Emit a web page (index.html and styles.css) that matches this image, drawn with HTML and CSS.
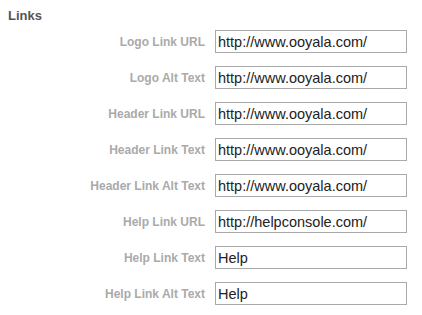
FILE: index.html
```html
<!DOCTYPE html>
<html lang="en">
<head>
    <meta charset="UTF-8">
    <title>Links</title>
    <link rel="stylesheet" href="styles.css">
</head>
<body>
    <div class="section">
        <h3 class="section-title">Links</h3>
        <div class="form-grid">
            <label for="logo-link-url">Logo Link URL</label>
            <input id="logo-link-url" type="text" value="http://www.ooyala.com/">

            <label for="logo-alt-text">Logo Alt Text</label>
            <input id="logo-alt-text" type="text" value="http://www.ooyala.com/">

            <label for="header-link-url">Header Link URL</label>
            <input id="header-link-url" type="text" value="http://www.ooyala.com/">

            <label for="header-link-text">Header Link Text</label>
            <input id="header-link-text" type="text" value="http://www.ooyala.com/">

            <label for="header-link-alt">Header Link Alt Text</label>
            <input id="header-link-alt" type="text" value="http://www.ooyala.com/">

            <label for="help-link-url">Help Link URL</label>
            <input id="help-link-url" type="text" value="http://helpconsole.com/">

            <label for="help-link-text">Help Link Text</label>
            <input id="help-link-text" type="text" value="Help">

            <label for="help-link-alt">Help Link Alt Text</label>
            <input id="help-link-alt" type="text" value="Help">
        </div>
    </div>
</body>
</html>
```

FILE: styles.css
```css
body {
    margin: 0;
    padding: 8px;
    font-family: "Liberation Sans", Arial, sans-serif;
    background: #fff;
}

.section-title {
    margin: 0 0 6px;
    font-size: 13px;
    line-height: 16px;
    font-weight: bold;
    color: #555;
}

.form-grid {
    display: grid;
    grid-template-columns: 197px 192px;
    column-gap: 10px;
    row-gap: 13px;
    align-items: center;
}

.form-grid label {
    text-align: right;
    font-size: 12px;
    font-weight: bold;
    color: #aaa;
}

.form-grid input {
    box-sizing: border-box;
    width: 192px;
    height: 23px;
    margin: 0;
    padding: 0 2px;
    border: 1px solid #a9a9a9;
    font-family: "Liberation Sans", Arial, sans-serif;
    font-size: 14.5px;
    color: #222;
    background: #fff;
}
```
